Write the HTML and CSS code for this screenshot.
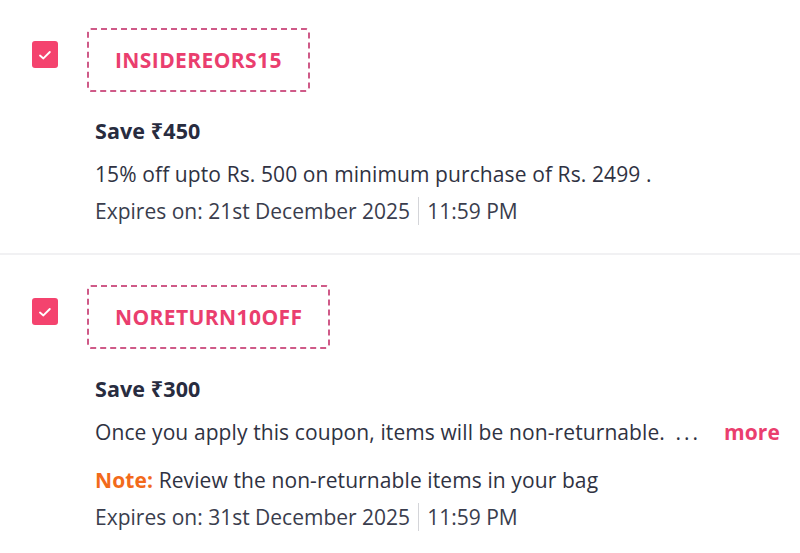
FILE: index.html
```
<!DOCTYPE html>
<html>
<head>
<meta charset="utf-8">
<link rel="stylesheet" href="styles.css">
</head>
<body>
<div class="list">
  <div class="coupon first">
    <div class="check">
      <svg width="16" height="16" viewBox="0 0 16 16"><path d="M3 8.6 L6.4 11.4 L12.8 5" fill="none" stroke="#fff" stroke-width="1.9" stroke-linecap="round" stroke-linejoin="round"/></svg>
    </div>
    <div class="content">
      <div class="code">INSIDEREORS15</div>
      <div class="details">
        <div class="save">Save ₹450</div>
        <div class="desc"><span>15% off upto Rs. 500 on minimum purchase of Rs. 2499 .</span></div>
        <div class="expiry"><span>Expires on: 21st December 2025</span><span class="divider"></span><span>11:59 PM</span></div>
      </div>
    </div>
  </div>
  <div class="separator"></div>
  <div class="coupon second">
    <div class="check">
      <svg width="16" height="16" viewBox="0 0 16 16"><path d="M3 8.6 L6.4 11.4 L12.8 5" fill="none" stroke="#fff" stroke-width="1.9" stroke-linecap="round" stroke-linejoin="round"/></svg>
    </div>
    <div class="content">
      <div class="code">NORETURN10OFF</div>
      <div class="details">
        <div class="save">Save ₹300</div>
        <div class="desc"><span>Once you apply this coupon, items will be non-returnable. <span class="ellipsis">...</span></span><span class="more">more</span></div>
        <div class="note"><span class="note-label">Note:</span> Review the non-returnable items in your bag</div>
        <div class="expiry"><span>Expires on: 31st December 2025</span><span class="divider"></span><span>11:59 PM</span></div>
      </div>
    </div>
  </div>
</div>
</body>
</html>
```
FILE: styles.css
```
html, body {
  margin: 0;
  padding: 0;
  background: #fff;
}
body {
  font-family: "Open Sans", "Noto Sans", sans-serif;
  color: #282c3f;
  width: 800px;
  height: 553px;
  overflow: hidden;
}
.coupon {
  display: flex;
  padding: 28px 20px 29px 32px;
}
.coupon.second {
  padding-top: 30px;
}
.check {
  width: 26px;
  height: 27px;
  margin-top: 13px;
  background: #f4436e;
  border-radius: 3px;
  display: flex;
  align-items: center;
  justify-content: center;
  flex: none;
}
.content {
  margin-left: 29px;
  flex: 1;
}
.code {
  display: inline-flex;
  align-items: center;
  justify-content: center;
  height: 60px;
  padding: 0 26px;
  border: 2px dashed #cf5a88;
  border-radius: 4px;
  color: #ea3e6e;
  font-weight: 700;
  font-size: 21px;
  letter-spacing: 0.4px;
}
.details {
  padding-left: 8px;
  font-size: 21px;
  line-height: 26px;
  letter-spacing: 0.1px;
}
.save {
  margin-top: 26px;
  font-weight: 700;
  font-size: 21.5px;
  color: #282c3f;
}
.second .save {
  margin-top: 27px;
}
.desc {
  margin-top: 17px;
  display: flex;
  color: #2f3242;
}
.ellipsis {
  letter-spacing: 3px;
  margin-left: 5px;
}
.more {
  margin-left: auto;
  color: #ea3e6e;
  font-weight: 700;
}
.note {
  margin-top: 22px;
  color: #2f3242;
}
.note-label {
  color: #f26a1b;
  font-weight: 700;
}
.expiry {
  margin-top: 11px;
  display: flex;
  align-items: center;
  height: 26px;
  letter-spacing: 0;
  color: #3a3d4d;
}
.divider {
  width: 1px;
  height: 28px;
  background: #d4d5d9;
  margin: 0 8px;
}
.separator {
  height: 2px;
  background: #f1f1f3;
}
```
